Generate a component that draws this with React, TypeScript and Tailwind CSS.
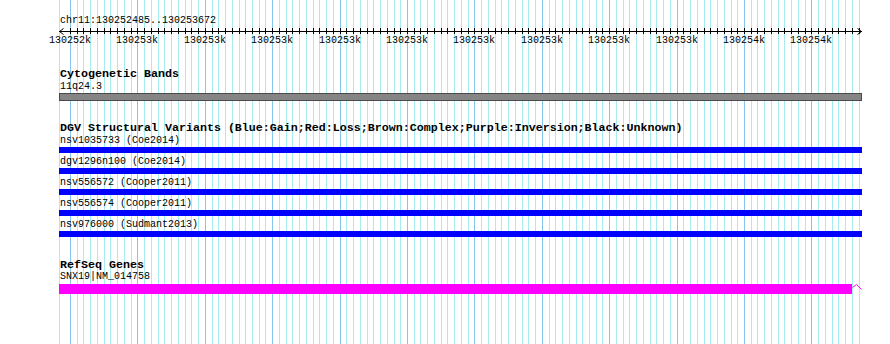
import React from "react";

const STEP = 6.74;
const ticks = Array.from({ length: 118 }, (_, k) => ({ x: Math.round(70 + k * STEP), major: k % 10 === 0 }));
const labels = [
    "130252k", "130253k", "130253k", "130253k", "130253k", "130253k",
    "130253k", "130253k", "130253k", "130253k", "130254k", "130254k",
];

const variants = [
    "nsv1035733 (Coe2014)",
    "dgv1296n100 (Coe2014)",
    "nsv556572 (Cooper2011)",
    "nsv556574 (Cooper2011)",
    "nsv976000 (Sudmant2013)",
];

const mono = "font-['Liberation_Mono','DejaVu_Sans_Mono',monospace]";

const GridLines = () => (
    <svg className="absolute inset-0 pointer-events-none" width={890} height={344}>
        <rect x={59} y={0} width={1} height={344} fill="#a8ecf0" />
        {ticks.map((t) => (
            <rect key={t.x} x={t.x} y={0} width={1} height={344} fill={t.major ? "#86c6ee" : "#a8ecf0"} />
        ))}
    </svg>
);

const Ruler = () => (
    <svg width={803} height={10} className="block">
        <line x1={0} y1={5.5} x2={803} y2={5.5} stroke="#000" strokeWidth={1} />
        {ticks.map((t) => (
            <line key={t.x} x1={t.x - 59 + 0.5} y1={2} x2={t.x - 59 + 0.5} y2={8} stroke="#000" strokeWidth={1} />
        ))}
        <polyline points="4.5,2.5 0.5,5.5 4.5,8.5" fill="none" stroke="#000" strokeWidth={1} />
        <polyline points="798.5,2.5 802.5,5.5 798.5,8.5" fill="none" stroke="#000" strokeWidth={1} />
    </svg>
);

const Heading = ({ children }: { children: React.ReactNode }) => (
    <div className={`${mono} font-bold text-[11.67px] leading-[12px] h-[12px] pl-px text-black whitespace-nowrap`}>
        {children}
    </div>
);

const Label = ({ children }: { children: React.ReactNode }) => (
    <div className={`${mono} text-[10px] leading-[10px] h-[10px] pl-px text-black whitespace-nowrap`}>
        {children}
    </div>
);

export default function App() {
    return (
        <div className="relative w-[890px] h-[344px] bg-white overflow-hidden">
            <GridLines />
            <div className="relative flex flex-col pl-[59px] pt-[16px] w-[862px]">
                <Label>chr11:130252485..130253672</Label>
                <Ruler />
                <div className="relative h-[10px]">
                    {labels.map((l, i) => (
                        <span
                            key={i}
                            className={`${mono} absolute top-0 w-[60px] text-center text-[10px] leading-[10px] text-black`}
                            style={{ left: ticks[i * 10].x - 59 - 30 }}
                        >
                            {l}
                        </span>
                    ))}
                </div>

                <div className="mt-[22px]">
                    <Heading>Cytogenetic Bands</Heading>
                </div>
                <div className="mt-[2px]">
                    <Label>11q24.3</Label>
                </div>
                <div className="mt-px h-[8px] w-[803px] bg-[#858585] border border-[#4a4a4a]" />

                <div className="mt-[21px]">
                    <Heading>DGV Structural Variants (Blue:Gain;Red:Loss;Brown:Complex;Purple:Inversion;Black:Unknown)</Heading>
                </div>
                <div className="mt-[2px] flex flex-col">
                    {variants.map((v) => (
                        <div key={v} className="flex flex-col h-[21px]">
                            <Label>{v}</Label>
                            <div className="mt-px h-[6px] w-[803px] bg-[#0000ff]" />
                        </div>
                    ))}
                </div>

                <div className="mt-[18px]">
                    <Heading>RefSeq Genes</Heading>
                </div>
                <div className="mt-px">
                    <Label>SNX19|NM_014758</Label>
                </div>
                <div className="mt-[2px] flex items-start">
                    <div className="h-[10px] w-[793px] bg-[#ff00ff]" />
                    <svg width={10} height={10} className="block">
                        <polyline points="0.5,3.5 4.5,0.5 9.5,5.5" fill="none" stroke="#ff00ff" strokeWidth={1} />
                    </svg>
                </div>
            </div>
        </div>
    );
}
